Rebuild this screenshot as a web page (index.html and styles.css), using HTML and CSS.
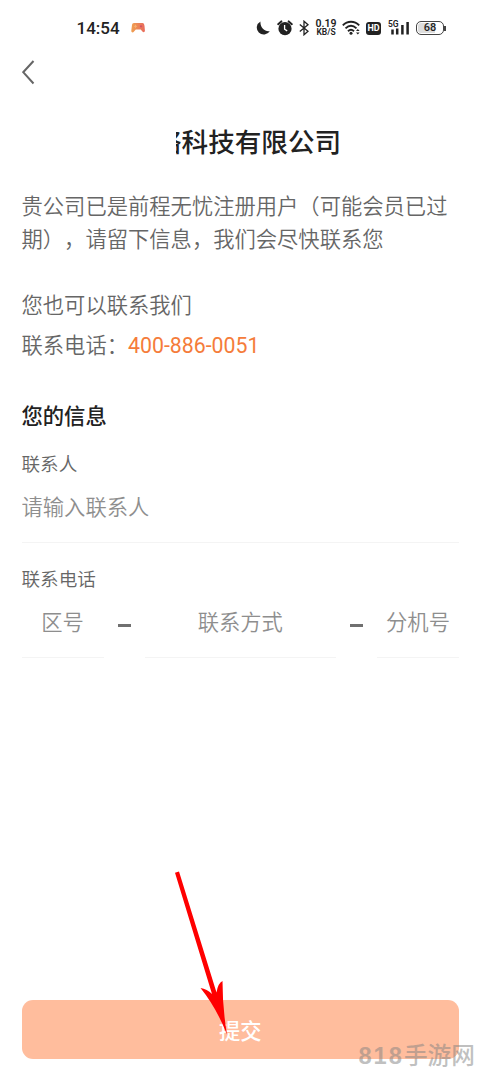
FILE: index.html
```
<!DOCTYPE html>
<html lang="zh-CN">
<head>
    <meta charset="UTF-8">
    <meta name="viewport" content="width=device-width, initial-scale=1.0">
    <title>联系我们</title>
    <link rel="stylesheet" href="styles.css">
</head>
<body>
    <div class="page">
        <div class="status">
            <span class="time">14:54</span>
            <svg class="game" width="14" height="12" viewBox="0 0 14 12">
                <defs>
                    <linearGradient id="pad" x1="0" y1="0" x2="1" y2="0">
                        <stop offset="0" stop-color="#f0a050"/>
                        <stop offset="1" stop-color="#e86a5c"/>
                    </linearGradient>
                </defs>
                <path d="M3 1h8.500c1.300 0 1.700 1 2 3l.4 4.500c.1 1.700-1.500 2.200-2.500 1L9.700 7.500H4.800L2.800 9.800C1.800 11 .1 10.300.3 8.500L1 3C1.200 1.700 1.800 1 3 1z" fill="url(#pad)"/>
                <path d="M3 4.300h3M4.500 2.800v3" stroke="#f4b070" stroke-width="1"/>
                <circle cx="10" cy="4.300" r="1.100" fill="#d0506a"/>
            </svg>
            <div class="icons">
                <svg width="14" height="14" viewBox="0 0 14 14">
                    <path d="M4.500.4A7 7 0 1 0 13.900 10C9.500 11.200 3.700 7 4.500.4z" fill="#222"/>
                </svg>
                <svg class="alarm" width="16" height="16" viewBox="0 0 16 16">
                    <circle cx="8" cy="8.700" r="6.600" fill="#222"/>
                    <path d="M1.200 4.200 4.300 1.400M14.800 4.200 11.700 1.400" stroke="#222" stroke-width="2" stroke-linecap="round"/>
                    <path d="M7.600 5v4.200l2.600 1.700" fill="none" stroke="#fff" stroke-width="1.300"/>
                </svg>
                <svg class="bt" width="10" height="16" viewBox="0 0 10 16">
                    <path d="M.8 4.500 9 11.300 5 14.800V1.200l4 3.500L.8 11.500" fill="none" stroke="#222" stroke-width="1.300"/>
                </svg>
                <div class="speed"><b>0.19</b><i>KB/S</i></div>
                <svg class="wifi" width="20" height="16" viewBox="0 0 20 16">
                    <g fill="none" stroke="#222" stroke-width="1.900">
                        <path d="M.8 5.400C5.500.6 12.500.6 17.200 5.400"/>
                        <path d="M3.500 8.400C7 5 11 5 14.500 8.400"/>
                        <path d="M6 11.200c2-1.900 4-1.900 6 0"/>
                    </g>
                    <circle cx="9" cy="13.300" r="1.500" fill="#222"/>
                    <path d="M14 11l1.800-2 1.800 2zM14 12.500l1.800 2 1.800-2z" fill="#222"/>
                </svg>
                <span class="hd">HD</span>
                <svg class="signal" width="22" height="16" viewBox="0 0 22 16">
                    <text x="0" y="7" class="net">5G</text>
                    <path d="M4.500 9.500v5M9.200 8.500v6M14.400 5v9.500M19.600 2v12.500" stroke="#222" stroke-width="2.500"/>
                </svg>
                <div class="battery"><span>68</span></div>
            </div>
        </div>

        <div class="nav">
            <svg width="14" height="26" viewBox="0 0 14 26">
                <path d="M11.500 2 1.200 13.200 11.500 24.500" fill="none" stroke="#666" stroke-width="2"/>
            </svg>
        </div>

        <h1 class="company">络科技有限公司</h1>
        <p class="tip">贵公司已是前程无忧注册用户（可能会员已过期），请留下信息，我们会尽快联系您</p>
        <div class="contact">
            <p>您也可以联系我们</p>
            <p>联系电话：<a class="tel">400-886-0051</a></p>
        </div>

        <h2 class="subtitle">您的信息</h2>
        <label class="label">联系人</label>
        <input class="input" type="text" placeholder="请输入联系人">
        <label class="label label-tel">联系电话</label>
        <div class="row">
            <input class="input short" type="text" placeholder="区号">
            <span class="dash"></span>
            <input class="input center" type="text" placeholder="联系方式">
            <span class="dash"></span>
            <input class="input short" type="text" placeholder="分机号">
        </div>

        <button class="submit">提交</button>

        <!-- arrow to the submit button -->
        <svg class="arrow" width="60" height="170" viewBox="0 0 60 170">
            <path d="M5 2.800 9 1.400 46.500 122.500Q48 113 52.500 111Q52.500 138 57 164.500Q46 137 30.500 118Q37 119 42 124z" fill="#f00"/>
        </svg>
        <div class="mark"><span>818</span>手游网</div>
    </div>
</body>
</html>
```
FILE: styles.css
```
*{
    margin: 0;
    padding: 0;
    box-sizing: border-box;
}
body{
    background: #fff;
    color: #666;
    font-family: Roboto, "Noto Sans CJK SC", sans-serif;
    font-size: 21.3px;
    font-weight: 350;
    text-spacing-trim: space-all;
}
.page{
    position: relative;
    display: flex;
    flex-direction: column;
    width: 480px;
    height: 1072px;
    padding: 0 21px 13px 21.5px;
    overflow: hidden;
}

/* status bar */
.status{
    display: flex;
    align-items: center;
    height: 56px;
    margin-right: -7px;
    padding-left: 55px;
    color: #222;
}
.time{
    width: 54px;
    font-size: 17px;
    font-weight: 500;
}
.icons{
    display: flex;
    align-items: center;
    margin-left: auto;
    margin-right: 20px;
}
.alarm{
    margin-left: 7px;
}
.bt{
    margin-left: 6px;
}
.speed{
    width: 22px;
    margin-left: 6px;
    text-align: center;
    white-space: nowrap;
}
.speed b, .speed i{
    display: block;
    font-style: normal;
    font-weight: 600;
}
.speed b{
    height: 9px;
    font-size: 10.5px;
    line-height: 9px;
}
.speed i{
    height: 9px;
    font-size: 8.5px;
    line-height: 9px;
}
.wifi{
    margin-left: 5px;
}
.hd{
    width: 15px;
    height: 13px;
    margin-left: 4px;
    border-radius: 3px;
    background: #222;
    color: #fff;
    font-size: 9px;
    font-weight: 700;
    line-height: 13px;
    text-align: center;
}
.signal{
    margin-left: 7px;
}
.net{
    font-size: 8.5px;
    font-weight: 600;
    fill: #222;
}
.battery{
    display: flex;
    align-items: center;
    margin-left: 6px;
}
.battery span{
    width: 28px;
    height: 14px;
    border: 1px solid #444;
    border-radius: 5px;
    background: linear-gradient(90deg, #ddd 68%, #fff 68%);
    box-shadow: inset 0 0 0 1px #fff;
    font-size: 11px;
    font-weight: 500;
    line-height: 12px;
    text-align: center;
}
.battery::after{
    content: "";
    width: 2px;
    height: 5px;
    background: #444;
}

.nav{
    display: flex;
    align-items: center;
    height: 32px;
}

.company{
    height: 36px;
    margin: 37px 0 0 154.5px;
    overflow: hidden;
    color: #222;
    font-size: 26.6px;
    font-weight: 500;
    line-height: 36px;
    text-indent: -21px;
    white-space: nowrap;
}
.tip{
    margin-top: 29px;
    line-height: 33.4px;
}
.contact{
    margin-top: 29px;
    line-height: 40px;
}
.tel{
    color: #f57c3a;
    font-weight: 400;
}

/* form */
.subtitle{
    margin-top: 36px;
    color: #222;
    font-size: 21.3px;
    font-weight: 500;
    line-height: 30px;
}
.label{
    margin-top: 21px;
    font-size: 18.6px;
    line-height: 24px;
}
.label-tel{
    margin-top: 25px;
}
.input{
    width: 100%;
    height: 50px;
    margin-top: 16px;
    padding-bottom: 19px;
    border: 0;
    border-bottom: 1px solid #f4f4f4;
    outline: none;
    background: none;
    font: inherit;
}
.input::placeholder{
    color: #8e8e8e;
}
.row{
    display: flex;
}
.row .input{
    text-align: center;
}
.row .short{
    flex: none;
    width: 82px;
}
.dash{
    flex: none;
    width: 13px;
    height: 3px;
    margin: 32px 14px 0;
    background: #707070;
}

.submit{
    height: 59px;
    margin-top: auto;
    border: 0;
    border-radius: 11px;
    background: #ffbd9d;
    color: #fff;
    font: inherit;
    font-weight: 500;
}
.arrow{
    position: absolute;
    left: 170px;
    top: 870px;
}
.mark{
    position: absolute;
    right: 5px;
    bottom: 0;
    color: rgba(130, 130, 130, .5);
    font-size: 23.7px;
    font-weight: 500;
    line-height: 32px;
}
.mark span{
    font-family: "Liberation Sans", sans-serif;
    font-weight: 700;
    letter-spacing: 2px;
}
```
